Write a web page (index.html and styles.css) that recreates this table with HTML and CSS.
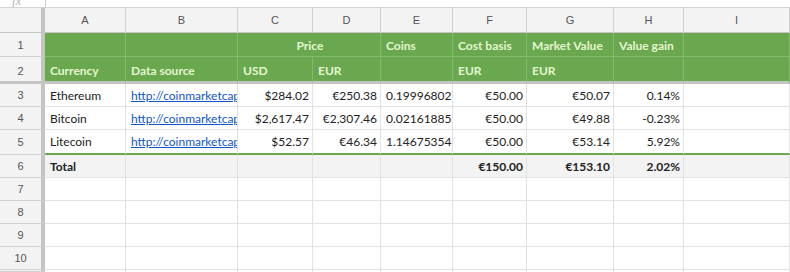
FILE: index.html
```html
<!DOCTYPE html>
<html>
<head>
<meta charset="utf-8">
<link rel="stylesheet" href="styles.css">
</head>
<body>
<div class="topbar"><span class="fx">fx</span><span class="topline"></span></div>
<div class="sheet">
  <div class="corner"></div>
  <div class="ch">A</div><div class="ch">B</div><div class="ch">C</div><div class="ch">D</div><div class="ch">E</div><div class="ch">F</div><div class="ch">G</div><div class="ch">H</div><div class="ch last">I</div>

  <div class="rh">1</div>
  <div class="g"></div><div class="g"></div><div class="g span2 center">Price</div><div class="g">Coins</div><div class="g">Cost basis</div><div class="g">Market Value</div><div class="g">Value gain</div><div class="g"></div>

  <div class="rh r2">2</div>
  <div class="g r2">Currency</div><div class="g r2">Data source</div><div class="g r2">USD</div><div class="g r2">EUR</div><div class="g r2"></div><div class="g r2">EUR</div><div class="g r2">EUR</div><div class="g r2"></div><div class="g r2"></div>

  <div class="rh">3</div>
  <div class="c">Ethereum</div><div class="c"><span class="link">http://coinmarketcap.com/currencies/ethereum/</span></div><div class="c n">$284.02</div><div class="c n">€250.38</div><div class="c">0.19996802</div><div class="c n">€50.00</div><div class="c n">€50.07</div><div class="c n">0.14%</div><div class="c"></div>

  <div class="rh">4</div>
  <div class="c">Bitcoin</div><div class="c"><span class="link">http://coinmarketcap.com/currencies/bitcoin/</span></div><div class="c n">$2,617.47</div><div class="c n">€2,307.46</div><div class="c">0.02161885</div><div class="c n">€50.00</div><div class="c n">€49.88</div><div class="c n">-0.23%</div><div class="c"></div>

  <div class="rh">5</div>
  <div class="c gb">Litecoin</div><div class="c gb"><span class="link">http://coinmarketcap.com/currencies/litecoin/</span></div><div class="c gb n">$52.57</div><div class="c gb n">€46.34</div><div class="c gb">1.14675354</div><div class="c gb n">€50.00</div><div class="c gb n">€53.14</div><div class="c gb n">5.92%</div><div class="c gb"></div>

  <div class="rh">6</div>
  <div class="c t">Total</div><div class="c t"></div><div class="c t"></div><div class="c t"></div><div class="c t"></div><div class="c t n">€150.00</div><div class="c t n">€153.10</div><div class="c t n">2.02%</div><div class="c t"></div>

  <div class="rh">7</div>
  <div class="c"></div><div class="c"></div><div class="c"></div><div class="c"></div><div class="c"></div><div class="c"></div><div class="c"></div><div class="c"></div><div class="c"></div>
  <div class="rh">8</div>
  <div class="c"></div><div class="c"></div><div class="c"></div><div class="c"></div><div class="c"></div><div class="c"></div><div class="c"></div><div class="c"></div><div class="c"></div>
  <div class="rh">9</div>
  <div class="c"></div><div class="c"></div><div class="c"></div><div class="c"></div><div class="c"></div><div class="c"></div><div class="c"></div><div class="c"></div><div class="c"></div>
  <div class="rh">10</div>
  <div class="c"></div><div class="c"></div><div class="c"></div><div class="c"></div><div class="c"></div><div class="c"></div><div class="c"></div><div class="c"></div><div class="c"></div>
  <div class="rh end"></div>
  <div class="c end"></div><div class="c end"></div><div class="c end"></div><div class="c end"></div><div class="c end"></div><div class="c end"></div><div class="c end"></div><div class="c end"></div><div class="c end"></div>
</div>
</body>
</html>
```
FILE: styles.css
```css
html, body {
  margin: 0;
  padding: 0;
  background: #fff;
  overflow: hidden;
}
body {
  width: 790px;
  height: 272px;
}
.topbar {
  height: 7px;
  position: relative;
  overflow: hidden;
  display: flex;
}
.fx {
  font-family: "Liberation Serif", serif;
  font-style: italic;
  font-size: 13px;
  color: #b8b8b8;
  margin-left: 12px;
  line-height: 10px;
  margin-top: -4px;
  width: 33px;
}
.topline {
  width: 1px;
  background: #d0d0d0;
  height: 7px;
}
.sheet {
  display: grid;
  grid-template-columns: 45px 81px 112px 75px 68px 72px 74px 87px 70px 106px;
  grid-template-rows: 26px 24px 27px 23px 23px 25px 23px 23px 23px 23px 23px 2px;
  font-family: "Lato", "Open Sans", sans-serif;
  font-size: 12px;
  color: #222;
}
.sheet > div {
  box-sizing: border-box;
  border-right: 1px solid #e2e2e2;
  border-bottom: 1px solid #e2e2e2;
  display: flex;
  align-items: center;
  white-space: nowrap;
  overflow: hidden;
  padding: 0 3px 0 5px;
  min-width: 0;
}
.sheet > .end {
  border-bottom: 0;
}
.corner {
  background: #f3f3f3;
  border-top: 1px solid #d4d4d4;
  border-right: 4px solid #c4c4c4 !important;
  border-bottom: 1px solid #c6c6c6 !important;
}
.sheet > .ch {
  background: #f3f3f3;
  border-top: 1px solid #d4d4d4;
  border-right: 1px solid #d0d0d0;
  border-bottom: 1px solid #c6c6c6;
  justify-content: center;
  font-family: "Liberation Sans", Arial, sans-serif;
  font-size: 11px;
  color: #555;
  padding: 0;
}
.sheet > .rh {
  background: #f3f3f3;
  border-right: 4px solid #c4c4c4;
  border-bottom: 1px solid #d2d2d2;
  justify-content: center;
  font-family: "Liberation Sans", Arial, sans-serif;
  font-size: 11px;
  color: #555;
  padding: 0;
}
.sheet > .g {
  background: #6aa84f;
  color: #e4f6cf;
  font-weight: bold;
  border-right: 1px solid #85b96d;
  border-bottom: 1px solid #85b96d;
  padding-top: 1px;
}
.sheet > .r2 {
  border-bottom: 3px solid #c4c4c4;
  padding-top: 3px;
}
.sheet > .rh.r2 {
  border-bottom: 3px solid #c4c4c4;
}
.span2 {
  grid-column: span 2;
}
.sheet > .center {
  justify-content: center;
}
.sheet > .n {
  justify-content: flex-end;
}
.link {
  color: #1155cc;
  text-decoration: underline;
}
.sheet > .gb {
  border-bottom: 2px solid #6aa84f;
}
.sheet > .t {
  background: #f3f3f3;
  font-weight: bold;
}
```
